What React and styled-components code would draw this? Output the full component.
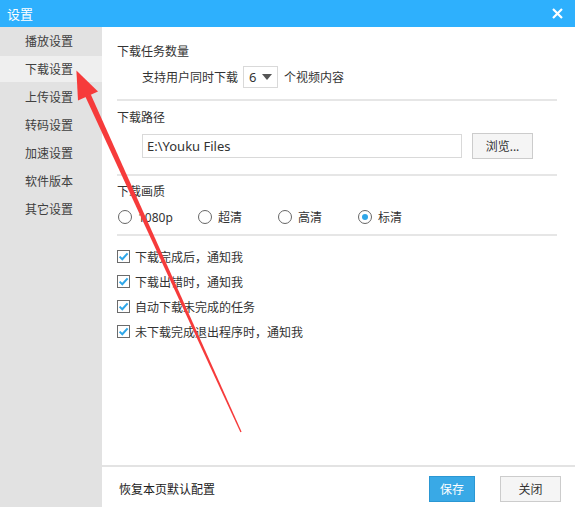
import styled, { createGlobalStyle } from "styled-components";

const GlobalStyle = createGlobalStyle`
  html, body {
    margin: 0;
    padding: 0;
    background: #fff;
  }
  body {
    font-family: "Noto Sans", "Noto Sans CJK SC", sans-serif;
    font-size: 12px;
    color: #333;
  }
`;

const Window = styled.div`
  position: relative;
  width: 575px;
  height: 507px;
  display: flex;
  flex-direction: column;
  overflow: hidden;
  background: #fff;
`;

const TitleBar = styled.div`
  height: 27px;
  flex: none;
  background: #2eb0fd;
  color: #fff;
  display: flex;
  align-items: center;
  justify-content: space-between;
  padding: 0 12px 0 7px;
  font-size: 13px;
`;

const CloseIcon = styled.svg`
  width: 11px;
  height: 11px;
  display: block;
`;

const Body = styled.div`
  flex: 1;
  display: flex;
  min-height: 0;
`;

const Sidebar = styled.nav`
  width: 102px;
  flex: none;
  background: #e2e2e2;
  display: flex;
  flex-direction: column;
`;

const NavItem = styled.div`
  height: 28px;
  display: flex;
  align-items: center;
  padding-left: 25px;
  color: #404040;
  background: ${(p) => (p.$active ? "#efefef" : "transparent")};
  box-shadow: ${(p) => (p.$active ? "inset 0 1px 0 #e2e2e2, inset 0 -1px 0 #e2e2e2" : "none")};
`;

const Main = styled.div`
  flex: 1;
  display: flex;
  flex-direction: column;
`;

const Content = styled.div`
  flex: 1;
  padding: 0 18px 0 15px;
`;

const Section = styled.section`
  padding: ${(p) => p.$pad};
  border-bottom: ${(p) => (p.$last ? "none" : "2px solid #e6e6e6")};
`;

const SectionTitle = styled.div`
  line-height: 20px;
  color: #333;
`;

const Row = styled.div`
  display: flex;
  align-items: center;
  margin-top: ${(p) => p.$mt || 0}px;
  margin-left: ${(p) => p.$indent || 0}px;
  height: ${(p) => p.$h || 24}px;
`;

const Select = styled.div`
  width: 35px;
  height: 22px;
  border: 1px solid #d9d9d9;
  margin: 0 6px 0 5px;
  display: flex;
  align-items: center;
  justify-content: space-between;
  padding: 0 5px;
  box-sizing: border-box;
  font-size: 13px;
`;

const Caret = styled.span`
  width: 0;
  height: 0;
  border-left: 5px solid transparent;
  border-right: 5px solid transparent;
  border-top: 6px solid #555;
`;

const PathInput = styled.div`
  width: 320px;
  height: 24px;
  box-sizing: border-box;
  border: 1px solid #d9d9d9;
  display: flex;
  align-items: center;
  padding-left: 4px;
  font-size: 13px;
  color: #333;
`;

const Button = styled.div`
  height: ${(p) => p.$h || 26}px;
  width: ${(p) => p.$w}px;
  box-sizing: border-box;
  display: flex;
  align-items: center;
  justify-content: center;
  margin-left: ${(p) => p.$ml || 0}px;
  background: ${(p) => (p.$primary ? "#39a9e6" : "#f5f5f5")};
  border: 1px solid ${(p) => (p.$primary ? "#2a97d3" : "#cccccc")};
  color: ${(p) => (p.$primary ? "#fff" : "#333")};
`;

const RadioItem = styled.label`
  width: 80px;
  display: flex;
  align-items: center;
  gap: 6px;
  margin-left: ${(p) => p.$ml || 0}px;
`;

const RadioCircle = styled.span`
  width: 14px;
  height: 14px;
  box-sizing: border-box;
  border-radius: 50%;
  border: 1px solid #666;
  background: #fff;
  display: flex;
  align-items: center;
  justify-content: center;
  &::after {
    content: "";
    width: 6px;
    height: 6px;
    border-radius: 50%;
    background: ${(p) => (p.$checked ? "#2ea6e8" : "transparent")};
  }
`;

const CheckRow = styled.div`
  height: 25px;
  display: flex;
  align-items: center;
  gap: 5px;
`;

const CheckBox = styled.svg`
  width: 13px;
  height: 13px;
  display: block;
  flex: none;
`;

const Footer = styled.footer`
  flex: none;
  height: 42px;
  box-sizing: border-box;
  border-top: 2px solid #e3e3e3;
  display: flex;
  align-items: center;
  padding: 4px 14px 0 17px;
`;

const ResetLink = styled.div`
  flex: 1;
  color: #222;
`;

const Overlay = styled.svg`
  position: absolute;
  left: 0;
  top: 0;
  width: 575px;
  height: 507px;
  pointer-events: none;
`;

const navItems = ["播放设置", "下载设置", "上传设置", "转码设置", "加速设置", "软件版本", "其它设置"];
const qualities = ["1080p", "超清", "高清", "标清"];
const notices = [
  "下载完成后，通知我",
  "下载出错时，通知我",
  "自动下载未完成的任务",
  "未下载完成退出程序时，通知我",
];

const Check = () => (
  <CheckBox viewBox="0 0 13 13">
    <rect x="0.5" y="0.5" width="12" height="12" fill="#fff" stroke="#6b6b6b" />
    <path d="M2.6 6.6 L5.3 9.2 L10.6 3.4" fill="none" stroke="#2ea6e8" strokeWidth="2" />
  </CheckBox>
);

export default function App() {
  return (
    <>
      <GlobalStyle />
      <Window>
        <TitleBar>
          <span>设置</span>
          <CloseIcon viewBox="0 0 11 11">
            <path d="M1 1 L10 10 M10 1 L1 10" stroke="#fff" strokeWidth="2.2" />
          </CloseIcon>
        </TitleBar>
        <Body>
          <Sidebar>
            {navItems.map((n) => (
              <NavItem key={n} $active={n === "下载设置"}>{n}</NavItem>
            ))}
          </Sidebar>
          <Main>
            <Content>
              <Section $pad="15px 0 10px">
                <SectionTitle>下载任务数量</SectionTitle>
                <Row $mt={3} $indent={25}>
                  支持用户同时下载
                  <Select>
                    6<Caret />
                  </Select>
                  个视频内容
                </Row>
              </Section>
              <Section $pad="7px 0 16px">
                <SectionTitle>下载路径</SectionTitle>
                <Row $mt={5} $indent={25} $h={25}>
                  <PathInput>E:\Youku Files</PathInput>
                  <Button $w={61} $ml={10}>浏览...</Button>
                </Row>
              </Section>
              <Section $pad="6px 0 7px">
                <SectionTitle>下载画质</SectionTitle>
                <Row $mt={5} $h={20}>
                  {qualities.map((q, i) => (
                    <RadioItem key={q} $ml={i === 0 ? 1 : 0}>
                      <RadioCircle $checked={q === "标清"} />
                      {q}
                    </RadioItem>
                  ))}
                </Row>
              </Section>
              <Section $pad="8px 0 0" $last>
                {notices.map((t) => (
                  <CheckRow key={t}>
                    <Check />
                    {t}
                  </CheckRow>
                ))}
              </Section>
            </Content>
            <Footer>
              <ResetLink>恢复本页默认配置</ResetLink>
              <Button $primary $w={46}>保存</Button>
              <Button $w={61} $ml={25}>关闭</Button>
            </Footer>
          </Main>
        </Body>
        <Overlay viewBox="0 0 575 507">
          <polygon points="76.4,70.5 78,100.5 98,91.5" fill="#f63b3b" />
          <polygon points="85.3,96.5 90.7,94.3 241.6,431.7 240.4,432.3" fill="#f63b3b" />
        </Overlay>
      </Window>
    </>
  );
}
